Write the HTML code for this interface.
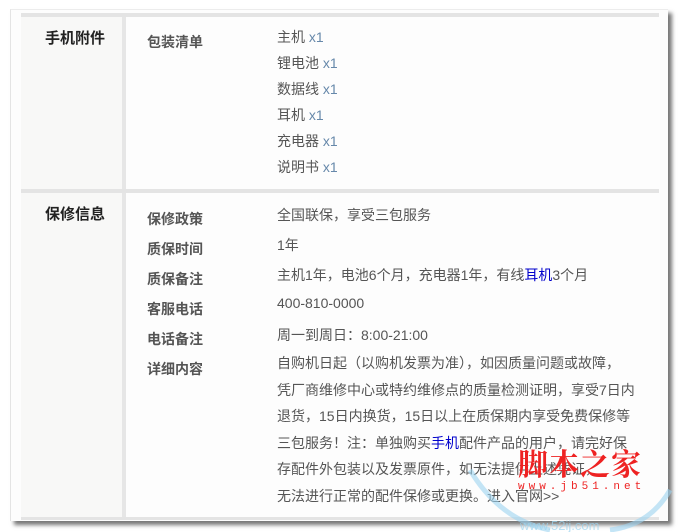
<!DOCTYPE html>
<html><head><meta charset="utf-8"><style>
body{margin:0;width:678px;height:532px;background:#fff;position:relative;overflow:hidden;font-family:"Liberation Sans","Noto Sans CJK SC",sans-serif;}
.card{position:absolute;left:10px;top:9px;width:657px;height:511px;background:#fdfdfd;border-left:1px solid #e4e4e4;border-top:1px solid #ececec;box-shadow:4px 4px 4px #777;}
.lc{position:absolute;left:21px;top:17px;width:101px;height:501px;background:#f8f8f7;}
.vs{position:absolute;left:122px;top:13px;width:4px;height:507px;background:#e6e6e6;}
.hs{position:absolute;left:21px;width:638px;height:4px;background:#e4e4e4;}
.t{position:absolute;white-space:nowrap;}
.h1{left:45px;font-size:15px;font-weight:bold;color:#222;}
.h2{left:147px;font-size:14px;font-weight:bold;color:#555;}
.v{left:277px;font-size:14px;color:#555;}
.n{color:#6688aa;}
.p{position:absolute;left:277px;top:350px;font-size:14px;line-height:26.5px;color:#555;white-space:nowrap;}
a{color:#00c;text-decoration:none;}
</style></head><body>
<div class="card"></div>
<div class="lc"></div>
<div class="vs"></div>
<div class="hs" style="top:13px"></div>
<div class="hs" style="top:189px"></div>
<div class="hs" style="top:517px;height:3px"></div>
<div class="t h1" style="top:27px">手机附件</div>
<div class="t h2" style="top:32px">包装清单</div>
<div class="t v" style="top:27px">主机 <span class="n">x1</span></div>
<div class="t v" style="top:53px">锂电池 <span class="n">x1</span></div>
<div class="t v" style="top:79px">数据线 <span class="n">x1</span></div>
<div class="t v" style="top:105px">耳机 <span class="n">x1</span></div>
<div class="t v" style="top:131px">充电器 <span class="n">x1</span></div>
<div class="t v" style="top:157px">说明书 <span class="n">x1</span></div>
<div class="t h1" style="top:203px">保修信息</div>
<div class="t h2" style="top:209px">保修政策</div>
<div class="t h2" style="top:239px">质保时间</div>
<div class="t h2" style="top:269px">质保备注</div>
<div class="t h2" style="top:299px">客服电话</div>
<div class="t h2" style="top:329px">电话备注</div>
<div class="t h2" style="top:359px">详细内容</div>
<div class="t v" style="top:205px">全国联保，享受三包服务</div>
<div class="t v" style="top:235px">1年</div>
<div class="t v" style="top:265px">主机1年，电池6个月，充电器1年，有线<a>耳机</a>3个月</div>
<div class="t v" style="top:295px">400-810-0000</div>
<div class="t v" style="top:325px">周一到周日：8:00-21:00</div>
<div class="p">自购机日起（以购机发票为准），如因质量问题或故障，<br>凭厂商维修中心或特约维修点的质量检测证明，享受7日内<br>退货，15日内换货，15日以上在质保期内享受免费保修等<br>三包服务！注：单独购买<a>手机</a>配件产品的用户，请完好保<br>存配件外包装以及发票原件，如无法提供上述凭证，<br>无法进行正常的配件保修或更换。进入官网&gt;&gt;</div>
<div class="t" style="left:518px;top:440px;font-size:30px;font-weight:bold;color:#e22;font-family:'Noto Serif CJK SC',serif;letter-spacing:1px">脚本之家</div>
<div class="t" style="left:518px;top:481px;font-size:11px;color:#e22;letter-spacing:4px;font-family:'Liberation Mono',monospace">www.jb51.net</div>
<svg style="position:absolute;left:460px;top:450px" width="218" height="82"><path d="M10 20 Q40 70 90 80" stroke="#9cd4f0" stroke-width="5" fill="none" opacity=".6"/><path d="M210 40 Q190 75 150 80" stroke="#9cd4f0" stroke-width="5" fill="none" opacity=".6"/><text x="60" y="80" font-size="13" fill="#9cd4f0" opacity=".7">www.52ij.com</text></svg>
</body></html>
